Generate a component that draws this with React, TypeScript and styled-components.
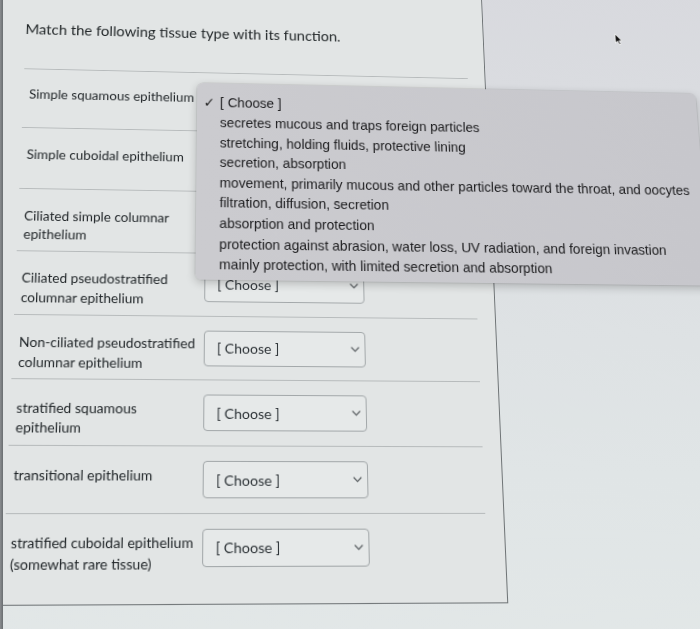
import React from "react";
import styled, { createGlobalStyle } from "styled-components";

const GlobalStyle = createGlobalStyle`
  html, body { margin: 0; padding: 0; }
  body {
    width: 700px;
    height: 629px;
    overflow: hidden;
    background: #dde1e3;
    font-family: Lato, "Open Sans", sans-serif;
  }
  * { box-sizing: border-box; }
`;

const Screen = styled.div`
  display: flex;
  width: 700px;
  height: 629px;
  overflow: hidden;
  background: #dde1e3;
`;

const Bezel = styled.div`
  flex: 0 0 3px;
  background: linear-gradient(to right, #8a8d90, #6a6e71);
`;

const Viewport = styled.div`
  flex: 1;
  position: relative;
  overflow: hidden;
`;

const Stage = styled.div`
  position: relative;
  display: flex;
  align-items: flex-start;
  width: 800px;
  height: 760px;
  margin: -60px 0 0 -43px;
  background: linear-gradient(180deg, #d8d9de 0%, #dcdfe2 35%, #e0e5e6 70%, #e3e8e8 100%);
  transform-origin: 290px 390px;
  transform: perspective(1000px) rotateX(10deg) rotateY(3deg);
`;

const Panel = styled.section`
  width: 540px;
  flex: none;
  padding: 63px 18px 20.6px 55.5px;
  background: #e2e5e5;
  border-right: 1px solid #6f7476;
  border-bottom: 1px solid #74797b;
  color: #2c3133;
`;

const Header = styled.header`
  padding: 0 0 33.7px 0;
`;

const Title = styled.h1`
  margin: 0;
  font-family: Lato, sans-serif;
  font-weight: 400;
  font-size: 15.4px;
  line-height: 20px;
  color: #23282a;
`;

const Row = styled.div`
  display: flex;
  align-items: flex-start;
  height: 64.76px;
  padding: 14px 0 0 6.5px;
  border-top: 1px solid #b7bbbc;
`;

const Label = styled.div`
  flex: 0 0 182.3px;
  margin-top: 4.5px;
  font-size: 13.6px;
  line-height: 19.5px;
  white-space: nowrap;
  color: #22272a;
`;

const SelectWrap = styled.div`
  position: relative;
  flex: 0 0 162px;
`;

const Select = styled.div`
  display: flex;
  align-items: center;
  justify-content: space-between;
  height: 36px;
  padding: 0 5px 0 11.7px;
  border: 1px solid #a3a8aa;
  border-radius: 4px;
  background: #e6e9e9;
  font-size: 14px;
  color: #2e3438;
`;

const Chevron = styled.svg`
  width: 9px;
  height: 6px;
  flex: none;
  margin-left: auto;
`;

const Menu = styled.ul`
  position: absolute;
  top: -2.4px;
  left: -9.7px;
  z-index: 10;
  width: 532px;
  margin: 0;
  padding: 10.9px 0 3.7px;
  list-style: none;
  background: linear-gradient(90deg, #cbcbcf 0%, #c7c7cc 100%);
  border-radius: 6px;
  box-shadow: 0 3px 10px rgba(0, 0, 0, 0.22), 0 0 0 0.5px rgba(0, 0, 0, 0.12);
  font-family: "Liberation Sans", Arial, sans-serif;
  font-size: 14.1px;
  line-height: 21.66px;
  color: #1c1c1e;
`;

const MenuItem = styled.li`
  display: flex;
  white-space: nowrap;
`;

const CheckSlot = styled.span`
  flex: 0 0 24.2px;
  padding-left: 2px;
  text-align: center;
  font-family: "DejaVu Sans", sans-serif;
  font-size: 14px;
  color: #222;
`;

const Cursor = styled.svg`
  position: absolute;
  left: 683px;
  top: 62px;
  width: 9px;
  height: 14px;
  z-index: 20;
`;

const options = [
  "secretes mucous and traps foreign particles",
  "stretching, holding fluids, protective lining",
  "secretion, absorption",
  "movement, primarily mucous and other particles toward the throat, and oocytes",
  "filtration, diffusion, secretion",
  "absorption and protection",
  "protection against abrasion, water loss, UV radiation, and foreign invastion",
  "mainly protection, with limited secretion and absorption",
];

const tissues: string[][] = [
  ["Simple squamous epithelium"],
  ["Simple cuboidal epithelium"],
  ["Ciliated simple columnar", "epithelium"],
  ["Ciliated pseudostratified", "columnar epithelium"],
  ["Non-ciliated pseudostratified", "columnar epithelium"],
  ["stratified squamous", "epithelium"],
  ["transitional epithelium"],
  ["stratified cuboidal epithelium", "(somewhat rare tissue)"],
];

const ChevronIcon = () => (
  <Chevron viewBox="0 0 9 6">
    <path d="M1 1 L4.5 4.6 L8 1" fill="none" stroke="#5a5f62" strokeWidth="1.2" strokeLinecap="round" />
  </Chevron>
);

export default function App() {
  return (
    <>
      <GlobalStyle />
      <Screen>
        <Bezel />
        <Viewport>
          <Stage>
            <Panel>
              <Header>
                <Title>Match the following tissue type with its function.</Title>
              </Header>
              {tissues.map((lines, i) => (
                <Row key={i}>
                  <Label>
                    {lines.map((l, j) => (
                      <div key={j}>{l}</div>
                    ))}
                  </Label>
                  <SelectWrap>
                    <Select>
                      {i > 2 && <span>[ Choose ]</span>}
                      <ChevronIcon />
                    </Select>
                    {i === 0 && (
                      <Menu>
                        <MenuItem>
                          <CheckSlot>✓</CheckSlot>
                          <span>[ Choose ]</span>
                        </MenuItem>
                        {options.map((o) => (
                          <MenuItem key={o}>
                            <CheckSlot />
                            <span>{o}</span>
                          </MenuItem>
                        ))}
                      </Menu>
                    )}
                  </SelectWrap>
                </Row>
              ))}
            </Panel>
            <Cursor viewBox="0 0 9 14">
              <path d="M0.6 0.6 L0.6 11 L3 8.8 L4.8 12.8 L6.4 12.1 L4.7 8.3 L7.8 8.3 Z" fill="#111" stroke="#fff" strokeWidth="0.9" strokeLinejoin="round" />
            </Cursor>
          </Stage>
        </Viewport>
      </Screen>
    </>
  );
}
